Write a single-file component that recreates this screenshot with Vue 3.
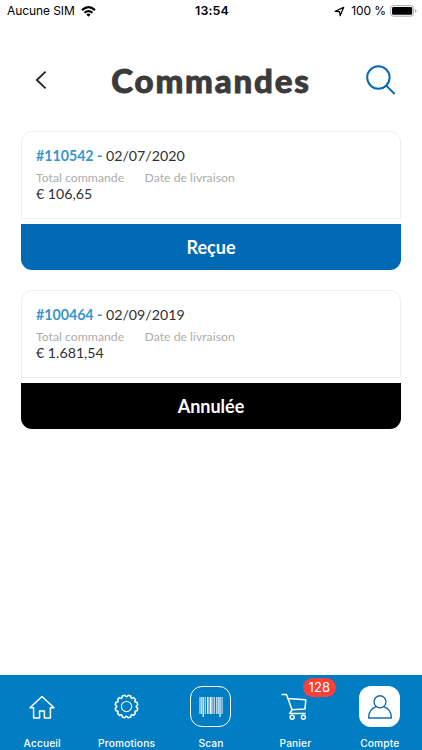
<script setup>
const orders = [
  { id: '#110542', date: '02/07/2020', total: '€ 106,65', status: 'Reçue', tone: 'received' },
  { id: '#100464', date: '02/09/2019', total: '€ 1.681,54', status: 'Annulée', tone: 'cancelled' },
]
const teeth = Array.from({ length: 12 }, (_, i) => {
  const point = (deg, r) => {
    const a = (deg * Math.PI) / 180
    return `${(12 + r * Math.cos(a)).toFixed(2)} ${(12 + r * Math.sin(a)).toFixed(2)}`
  }
  const s = i * 30 + 15
  return `${i ? 'L' : 'M'}${point(s - 7, 10.9)} L${point(s + 7, 10.9)} Q${point(s + 15, 7.9)} ${point(s + 23, 10.9)}`
}).join(' ') + 'Z'
</script>

<template>
  <div class="screen">
    <div class="status-bar">
      <div class="carrier">
        <span>Aucune SIM</span>
        <svg width="15" height="11" viewBox="0 0 15 11" fill="none" stroke="#000" stroke-width="2.1">
          <path d="M1 4.1Q7.5-1.7 14 4.1M3.5 6.8Q7.5 3.3 11.5 6.8" />
          <path d="M5.3 8.5Q7.5 6.7 9.7 8.5L7.5 10.8Z" fill="#000" stroke="none" />
        </svg>
      </div>
      <strong class="clock">13:54</strong>
      <div class="power">
        <svg width="11" height="11" viewBox="0 0 11 11" fill="none" stroke="#000" stroke-width="1.2" stroke-linejoin="round">
          <path d="M1.2 5.4L9.7 1.2 6.1 9.8 5.6 5.7Z" />
        </svg>
        <span>100 %</span>
        <svg class="battery" width="27" height="12" viewBox="0 0 27 12">
          <rect x=".6" y=".6" width="23" height="10.6" rx="2.8" fill="#fff" stroke="#aaa" />
          <rect x="2" y="2" width="20.2" height="7.8" rx="1.4" />
          <path d="M25 4Q26.5 4.4 26.5 5.9T25 7.8Z" fill="#aaa" />
        </svg>
      </div>
    </div>

    <header class="header">
      <svg class="back" width="12" height="20" viewBox="0 0 12 20" fill="none" stroke="#222" stroke-width="1.8">
        <path d="M10.6 1.6L1.8 10l8.8 8.4" />
      </svg>
      <h1>Commandes</h1>
      <svg class="search" width="30" height="30" viewBox="0 0 30 30" fill="none" stroke="#0869b2" stroke-width="2">
        <circle cx="12.4" cy="12.5" r="11.2" />
        <path d="M20.2 20.6L28.7 29" />
      </svg>
    </header>

    <main class="orders">
      <article v-for="order in orders" :key="order.id" class="order">
        <div class="details">
          <div class="heading"><b>{{ order.id }} -</b> {{ order.date }}</div>
          <div class="fields">
            <div class="field total">
              <span class="label">Total commande</span>
              <span class="value">{{ order.total }}</span>
            </div>
            <div class="field delivery"><span class="label">Date de livraison</span></div>
          </div>
        </div>
        <div class="state" :class="order.tone"><span>{{ order.status }}</span></div>
      </article>
    </main>

    <nav class="tabs">
      <div class="tab">
        <div class="icon">
          <svg width="28" height="26" viewBox="0 0 28 26" fill="none" stroke="#fff" stroke-width="1.5" stroke-linejoin="round">
            <path d="M2 13.7L14 2.5l12 11.2h-3.6V24h-6v-7h-4.8v7h-6V13.7Z" />
          </svg>
        </div>
        <span>Accueil</span>
      </div>
      <div class="tab">
        <div class="icon">
          <svg width="25" height="25" viewBox="0 0 24 24" fill="none" stroke="#fff" stroke-width="1.5" stroke-linejoin="round">
            <path :d="teeth" />
            <circle cx="12" cy="12" r="4.9" stroke-width="1" />
          </svg>
        </div>
        <span>Promotions</span>
      </div>
      <div class="tab">
        <div class="icon scan">
          <svg width="24" height="22" viewBox="0 0 24 22" fill="#fff">
            <path d="M.5 1h1v17h-1zM2.3 1h.8v17h-.8zM3.6 1h1.2v20H3.6zM5.8 1h.8v17h-.8zM8 1h.9v17H8zM9.5 1h.9v17h-.9zM11 1h1.6v17H11zM13.5 1h.8v17h-.8zM15 1h.7v17H15zM17.3 1h1.1v17h-1.1zM19 1h.7v17H19zM20.4 1h1.2v20h-1.2zM22.6 1h.9v17h-.9z" />
          </svg>
        </div>
        <span>Scan</span>
      </div>
      <div class="tab">
        <div class="icon cart">
          <svg width="27" height="28" viewBox="0 0 27 28" fill="none" stroke="#fff" stroke-width="1.5" stroke-linecap="round" stroke-linejoin="round">
            <path d="M1 1.5h4.5L11 16.8l-2.3 3.8h15.5M6.7 5.6l18.1 1.2-.8 9.3-13 .7" />
            <circle cx="11.2" cy="24.2" r="2" />
            <circle cx="22.4" cy="24.2" r="2" />
          </svg>
          <span class="badge">128</span>
        </div>
        <span>Panier</span>
      </div>
      <div class="tab">
        <div class="icon account">
          <svg width="26" height="26" viewBox="0 0 26 26" fill="none" stroke="#176bb3" stroke-width="1.35" stroke-linejoin="round">
            <circle cx="13" cy="7.7" r="6" />
            <path d="M9.2 12.6C4.2 14.4 1.6 18.2 1.6 24h22.8C24.4 18.2 21.8 14.4 16.8 12.6" />
          </svg>
        </div>
        <span>Compte</span>
      </div>
    </nav>
  </div>
</template>

<style>
body { background: #fff; }
</style>

<style scoped>
* { box-sizing: border-box; }
svg { display: block; flex: none; }
.screen {
  width: 100%;
  height: 750px;
  display: flex;
  flex-direction: column;
  overflow: hidden;
  font-family: Lato, sans-serif;
  color: #303030;
}
.status-bar {
  height: 22px;
  padding: 0 5px 0 7px;
  display: grid;
  grid-template-columns: 1fr auto 1fr;
  align-items: center;
  font: 12px/22px Inter, sans-serif;
  letter-spacing: -.08px;
  color: #000;
}
.carrier, .power { display: flex; align-items: center; white-space: nowrap; }
.carrier { gap: 6px; }
.clock { font-weight: 600; font-size: 12.4px; letter-spacing: .15px; }
.power { justify-content: flex-end; gap: 6px; }
.battery { margin-left: -2px; }
.header {
  height: 109px;
  padding: 7px 26px 0 35px;
  display: flex;
  align-items: center;
  justify-content: space-between;
}
h1 {
  margin: 0 0 1px 9px;
  font-size: 33px;
  line-height: 42px;
  font-weight: 900;
  letter-spacing: 1.85px;
  -webkit-text-stroke: .9px #3b3b3b;
  color: #3b3b3b;
}
.orders { flex: 1; padding: 0 21px; display: flex; flex-direction: column; gap: 20.5px; }
.order { height: 138.5px; display: flex; flex-direction: column; gap: 5px; }
.details {
  height: 88px;
  padding: 14px 14px 0;
  border: 1px solid #eee;
  border-radius: 11px 11px 0 0;
}
.heading { font-size: 14.2px; line-height: 20px; }
.heading b { color: #3995cd; font-weight: 700; }
.fields { display: flex; margin-top: 4px; }
.field { display: flex; flex-direction: column; }
.total { width: 108.5px; }
.label { font-size: 12.25px; line-height: 15px; color: #adadad; white-space: nowrap; }
.value { font-size: 14.2px; line-height: 17px; }
.state {
  height: 45.5px;
  display: flex;
  align-items: center;
  justify-content: center;
  border-radius: 0 0 11px 11px;
  color: #fff;
  font-size: 18px;
  font-weight: 700;
}
.received { background: #0069b4; }
.cancelled { background: #000; }
.tabs {
  height: 75px;
  display: grid;
  grid-template-columns: repeat(5, 1fr);
  background: #007dc3;
  color: #fff;
  font: 500 10.2px/14px Inter, sans-serif;
  letter-spacing: .15px;
}
.tab { display: flex; flex-direction: column; align-items: center; padding-top: 11px; gap: 9px; }
.icon {
  position: relative;
  width: 41px;
  height: 41px;
  display: flex;
  align-items: center;
  justify-content: center;
}
.scan { border: 1.5px solid #fff; border-radius: 12px; }
.cart { padding-right: 1px; }
.account { background: #fff; border-radius: 12px; }
.badge {
  position: absolute;
  top: -8px;
  left: 28px;
  width: 33px;
  height: 19px;
  border-radius: 10px;
  background: #f9403a;
  text-align: center;
  font: 13px/19px Inter, sans-serif;
  letter-spacing: .2px;
}
</style>
